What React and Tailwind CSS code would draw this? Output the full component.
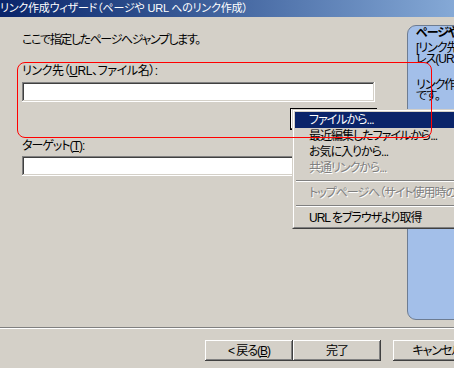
import React from 'react';

const raised =
  'shadow-[inset_-1px_-1px_#404040,inset_1px_1px_#ffffff,inset_-2px_-2px_#808080,inset_2px_2px_#d4d0c8]';
const sunken =
  'shadow-[inset_-1px_-1px_#ffffff,inset_1px_1px_#808080,inset_-2px_-2px_#d4d0c8,inset_2px_2px_#404040]';

function MenuItem({ children, active, disabled }) {
  return (
    <div
      className={`h-[16px] pl-[14px] leading-[16px] whitespace-nowrap ${
        active
          ? 'bg-[#0a246a] text-white'
          : disabled
          ? 'text-[#808080] [text-shadow:1px_1px_0_#ffffff]'
          : 'text-black'
      }`}
    >
      {children}
    </div>
  );
}

function Separator() {
  return (
    <div className="h-[9px] flex flex-col justify-center px-[1px]">
      <div className="border-t border-[#808080]" />
      <div className="border-t border-white" />
    </div>
  );
}

function Button({ children, className = '' }) {
  return (
    <div
      className={`h-[21px] w-[88px] bg-[#d4d0c8] flex items-center justify-center text-[12px] text-black ${raised} ${className}`}
    >
      {children}
    </div>
  );
}

export default function App() {
  return (
    <div className="relative w-[454px] h-[368px] overflow-hidden bg-[#d4d0c8] text-[12px] tracking-[-1px] text-black [font-family:'Liberation_Sans','Noto_Sans_CJK_JP',sans-serif] [font-feature-settings:'palt']">
      {/* title bar */}
      <div className="h-[17px] w-[560px] bg-gradient-to-r from-[#0a246a] to-[#a6caf0] text-white text-[11px] tracking-[-0.2px] leading-[17px] whitespace-nowrap">
        リンク作成ウィザード（ページや URL へのリンク作成）
      </div>

      {/* main area */}
      <div className="flex h-[310px] w-[540px]">
        <div className="w-[407px] shrink-0 pl-[22px] pt-[16px]">
          <div className="w-[355px] flex flex-col">
            <div className="leading-[14px] tracking-[-1.4px]">ここで指定したページへジャンプします。</div>
            <div className="mt-[17px] leading-[14px] tracking-[-0.4px]">
              リンク先（<span className="underline">U</span>RL、ファイル名）:
            </div>
            <div className={`mt-[4px] h-[20px] w-[353px] bg-white ${sunken}`} />
            <div className="mt-[6px] ml-auto h-[22px] w-[87px] border border-black bg-[#d4d0c8] shadow-[inset_-1px_-1px_#404040,inset_1px_1px_#ffffff]" />
            <div className="mt-[9px] leading-[14px]">
              ターゲット(<span className="underline">T</span>):
            </div>
            <div className={`mt-[3px] h-[20px] w-[353px] bg-white ${sunken}`} />
          </div>
        </div>

        {/* side info panel */}
        <div className="mt-[8px] mb-[7px] w-[120px] shrink-0 rounded-[9px] border border-[#6d7c92] bg-[#a3bfe9] pl-[8px] whitespace-nowrap overflow-hidden">
          <div className="font-bold leading-[14px]">ページやURLへのリンク</div>
          <div className="mt-[3px] leading-[11px]">
            <div>[リンク先]にはジャンプ先のアド</div>
            <div>レス(URL)を入力します。</div>
          </div>
          <div className="mt-[15px] leading-[11px]">
            <div>リンク作成後も編集が可能</div>
            <div>です。</div>
          </div>
        </div>
      </div>

      {/* separator */}
      <div className="w-full border-t border-[#808080]" />
      <div className="w-full border-t border-white" />

      {/* buttons */}
      <div className="mt-[11px] flex pl-[205px] w-[560px]">
        <Button>
          &lt;&nbsp;戻る(<span className="underline">B</span>)
        </Button>
        <Button>完了</Button>
        <Button className="ml-[12px]">キャンセル</Button>
      </div>

      {/* popup menu */}
      <div className="absolute left-[292px] top-[109px] w-[200px] border border-t-[#d4d0c8] border-l-[#d4d0c8] border-r-[#404040] border-b-[#404040]">
        <div className="border border-t-white border-l-white border-r-[#808080] border-b-[#808080] bg-[#d4d0c8] p-[1px]">
          <MenuItem active>ファイルから...</MenuItem>
          <MenuItem>最近編集したファイルから...</MenuItem>
          <MenuItem>お気に入りから...</MenuItem>
          <MenuItem disabled>共通リンクから...</MenuItem>
          <Separator />
          <MenuItem disabled>トップページへ（サイト使用時のみ）</MenuItem>
          <Separator />
          <MenuItem>URL をブラウザより取得</MenuItem>
        </div>
      </div>

      {/* red annotation */}
      <div className="absolute left-[17px] top-[62px] w-[415px] h-[76px] rounded-[8px] border border-[#ff0000] pointer-events-none" />
    </div>
  );
}
